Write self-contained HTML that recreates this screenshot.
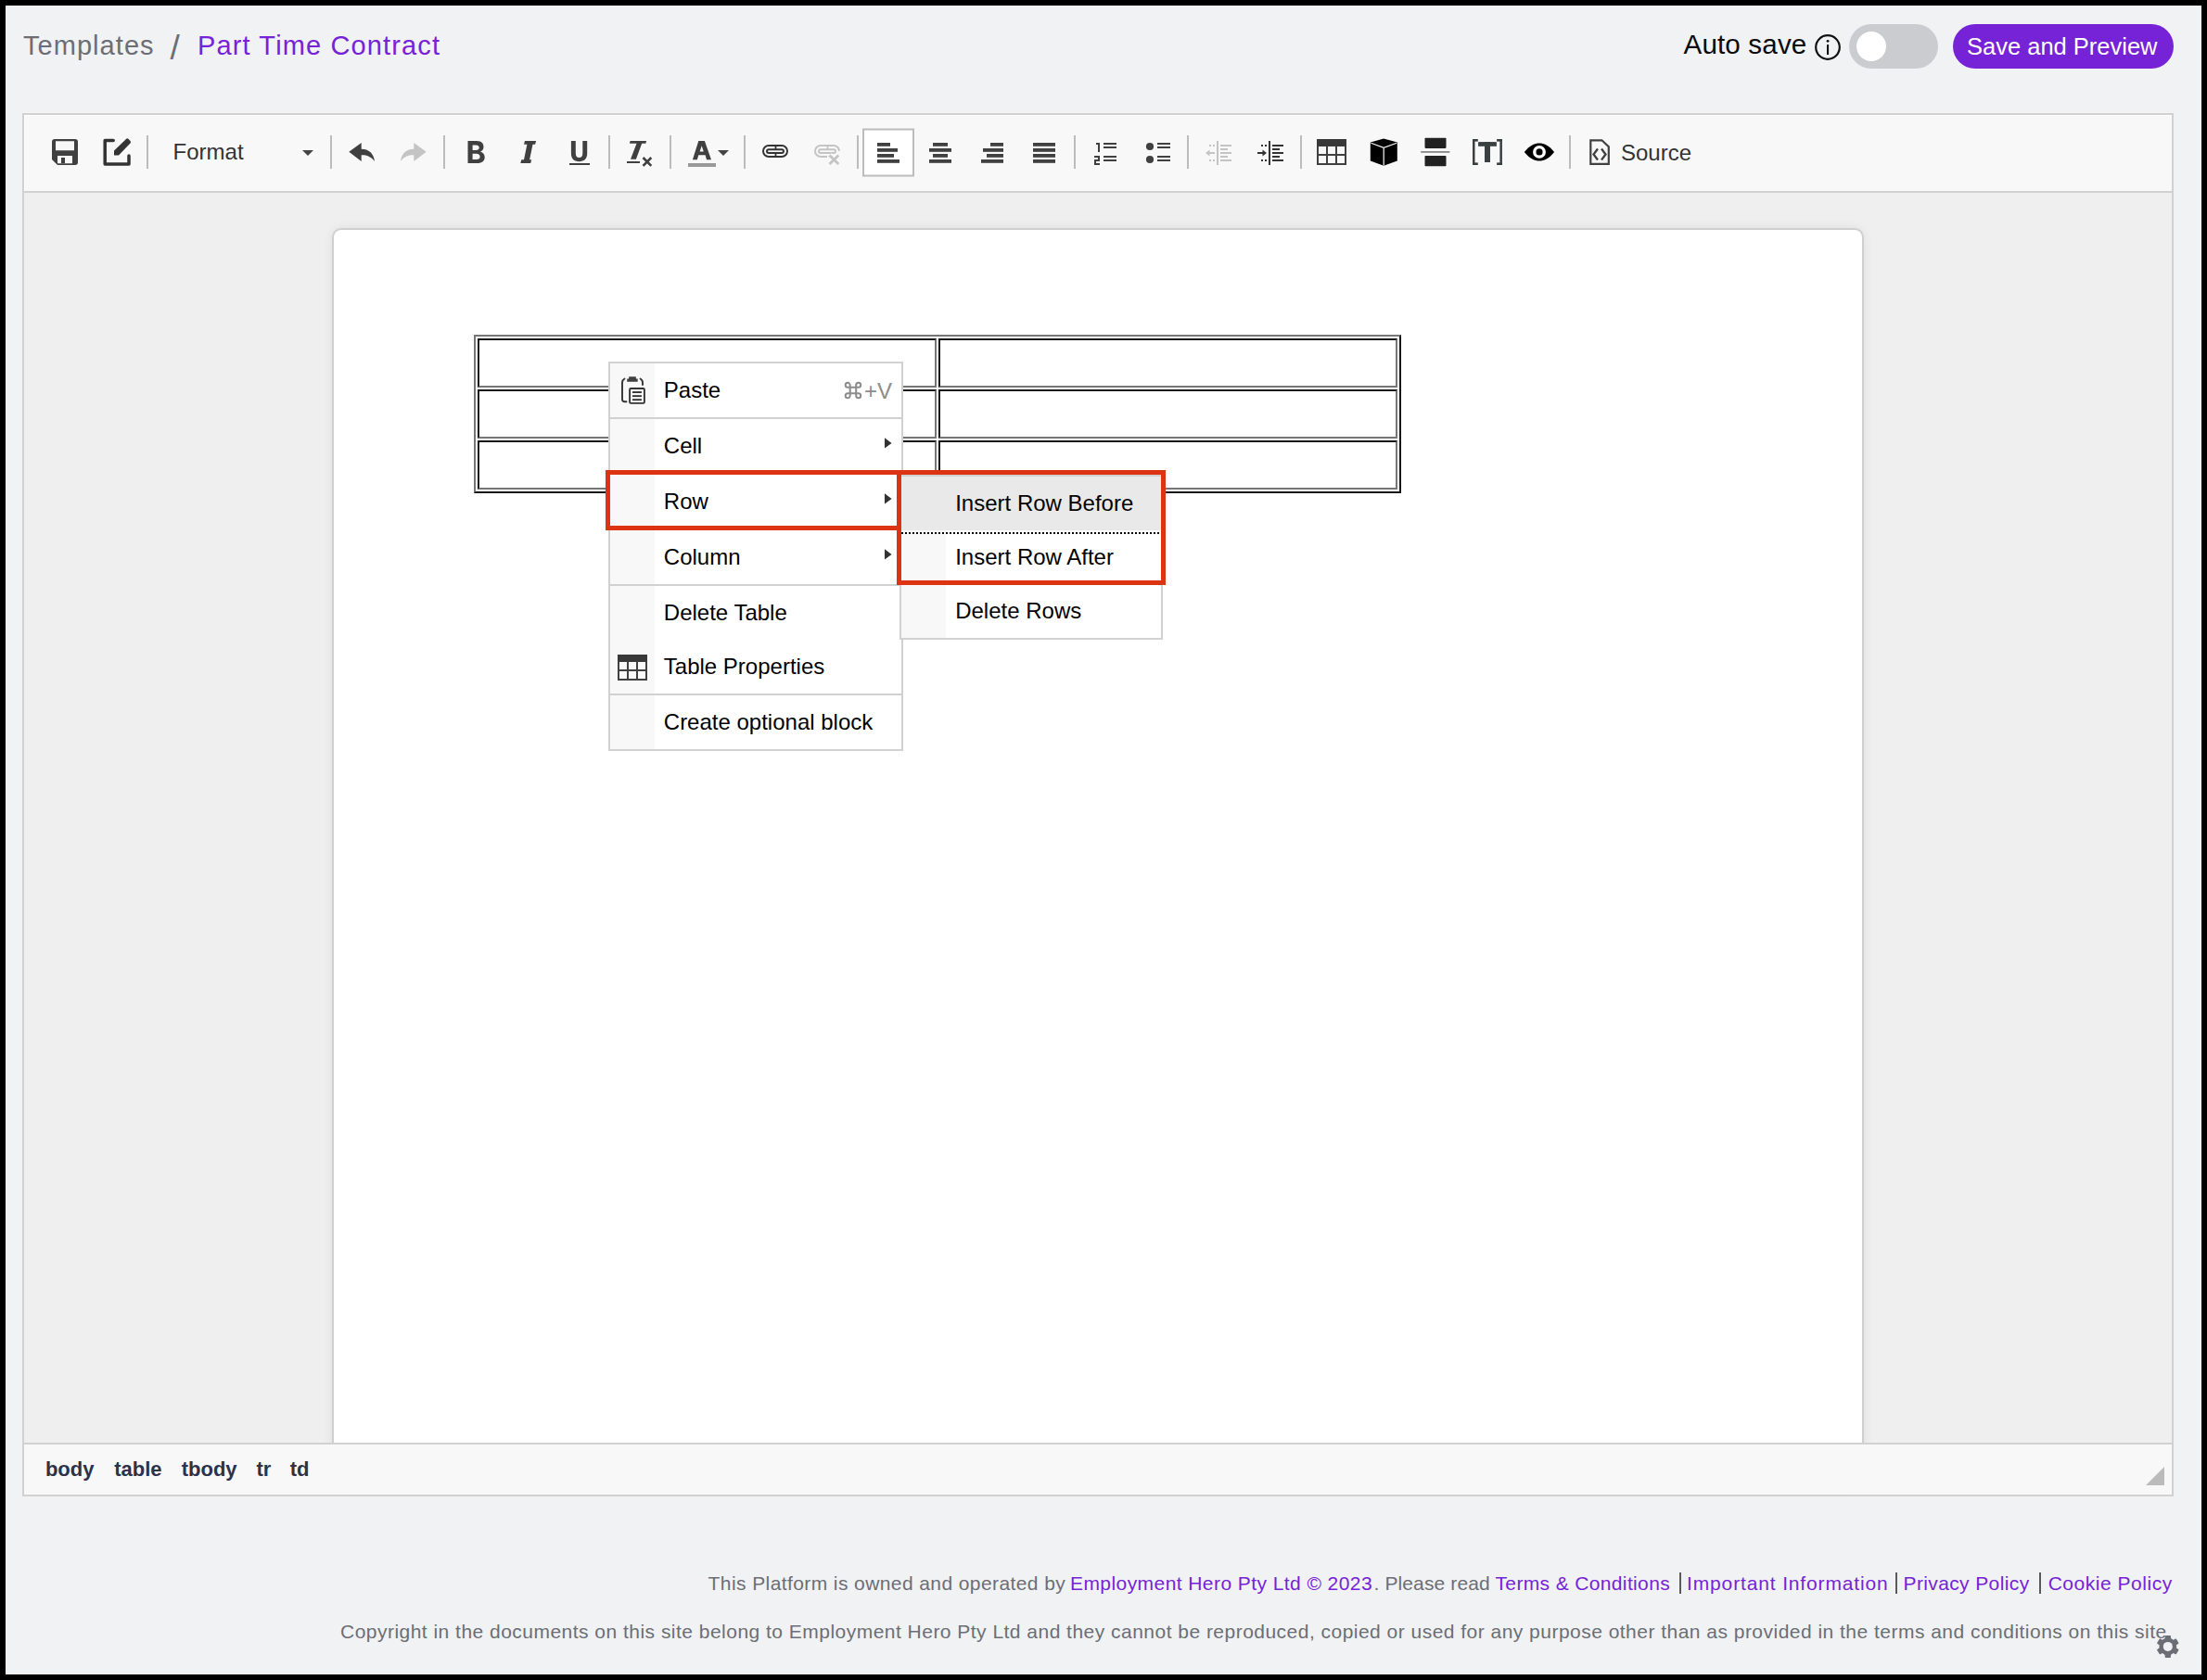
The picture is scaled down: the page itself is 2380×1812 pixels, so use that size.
<!DOCTYPE html>
<html>
<head>
<meta charset="utf-8">
<style>
html,body{margin:0;padding:0;}
body{width:2380px;height:1812px;overflow:hidden;background:#000;position:relative;font-family:"Liberation Sans",sans-serif;}
.a{position:absolute;}
.t{position:absolute;white-space:pre;line-height:1;}
#app{left:6px;top:6px;width:2368px;height:1800px;background:#fff;}
#bg{left:7px;top:7px;width:2366px;height:1798px;background:#f1f2f4;}
svg{position:absolute;overflow:visible;}
</style>
</head>
<body>
<div id="app" class="a"></div>
<div id="bg" class="a"></div>

<!-- HEADER -->
<div class="t" style="left:25px;top:35.2px;font-size:29px;letter-spacing:1.05px;color:#6b6e75;">Templates</div>
<div class="t" style="left:183.5px;top:32.5px;font-size:37px;color:#6b6e75;">/</div>
<div class="t" style="left:213px;top:35.2px;font-size:29px;letter-spacing:1.13px;color:#7622d7;">Part Time Contract</div>

<div class="t" style="left:1815.5px;top:32.6px;font-size:29.6px;letter-spacing:0.15px;color:#0b0b0b;">Auto save</div>
<!-- info icon -->
<svg style="left:1957px;top:36.6px" width="28" height="28" viewBox="0 0 28 28">
  <circle cx="14" cy="14" r="12.8" fill="none" stroke="#111" stroke-width="2.2"/>
  <rect x="13" y="11" width="2.1" height="11" rx="0.5" fill="#111"/>
  <circle cx="14.05" cy="7.3" r="1.4" fill="#111"/>
</svg>
<!-- toggle -->
<div class="a" style="left:1994px;top:26px;width:96px;height:48px;border-radius:24px;background:#cbccd0;"></div>
<div class="a" style="left:2002px;top:34px;width:32px;height:32px;border-radius:16px;background:#fff;"></div>
<!-- button -->
<div class="a" style="left:2106px;top:26px;width:238px;height:48px;border-radius:24px;background:#7622d7;"></div>
<div class="t" style="left:2121px;top:38.1px;font-size:25.5px;color:#fff;">Save and Preview</div>

<!-- EDITOR -->
<div class="a" style="left:24px;top:122px;width:2316px;height:1488px;border:2px solid #d1d1d1;background:#efefef;"></div>
<div class="a" style="left:26px;top:124px;width:2316px;height:82px;background:#f8f8f8;border-bottom:2px solid #d1d1d1;box-shadow:inset 1px 1px 0 #fff;"></div>

<!--TOOLBAR-->
<svg style="left:0;top:0" width="2380" height="260" viewBox="0 0 2380 260">
<rect x="158" y="146" width="2" height="36" fill="#bcbcbc"/>
<rect x="356" y="146" width="2" height="36" fill="#bcbcbc"/>
<rect x="478" y="146" width="2" height="36" fill="#bcbcbc"/>
<rect x="656" y="146" width="2" height="36" fill="#bcbcbc"/>
<rect x="722" y="146" width="2" height="36" fill="#bcbcbc"/>
<rect x="802" y="146" width="2" height="36" fill="#bcbcbc"/>
<rect x="924" y="146" width="2" height="36" fill="#bcbcbc"/>
<rect x="1158" y="146" width="2" height="36" fill="#bcbcbc"/>
<rect x="1280" y="146" width="2" height="36" fill="#bcbcbc"/>
<rect x="1402" y="146" width="2" height="36" fill="#bcbcbc"/>
<rect x="1692" y="146" width="2" height="36" fill="#bcbcbc"/>
<path fill="#404040" fill-rule="evenodd" d="M59,150 H81 Q84,150 84,153 V175 Q84,178 81,178 H62 L56,172 V153 Q56,150 59,150 Z M60,152.2 H80 V162.2 H60 Z M62,168 H78 V176.2 H62 Z"/>
<rect x="66" y="170" width="4" height="6.2" fill="#404040"/>
<path d="M122.2,151.4 H113.2 V177 H139 V168" fill="none" stroke="#333" stroke-width="3.5" stroke-linecap="round" stroke-linejoin="round"/>
<path fill="#333" d="M123,162.6 L136,149.9 Q137.3,148.8 138.6,150 L140.5,151.9 Q141.6,153.2 140.5,154.4 L128,167.6 H123 Z"/>
<path fill="#444" d="M326,162 H338 L332,168 Z"/>
<path fill="#404040" d="M376.3,163.8 L389.7,153.9 V160.7 C397,160.5 403,165 404,174 C400,168.5 395,167 389.7,167.2 V174 Z"/>
<path fill="#c4c4c4" transform="translate(836,0) scale(-1,1)" d="M376.3,163.8 L389.7,153.9 V160.7 C397,160.5 403,165 404,174 C400,168.5 395,167 389.7,167.2 V174 Z"/>
<path fill="#404040" fill-rule="evenodd" d="M504.5,152 H514 C519.5,152 521.5,155 521.5,158.2 C521.5,161 520,162.8 518,163.5 C521,164.3 522.7,166.8 522.7,169.5 C522.7,173.5 520,176 514.5,176 H504.5 Z M509.6,156.6 H513 C515.5,156.6 516.7,157.6 516.7,159.2 C516.7,160.9 515.5,161.9 513,161.9 H509.6 Z M509.6,165.8 H513.5 C516.5,165.8 517.6,167.2 517.6,168.9 C517.6,170.8 516.5,171.9 513.5,171.9 H509.6 Z"/>
<path fill="#404040" d="M566,152 H578.1 L577.1,155.7 H574.5 L571.1,172.2 H573.2 L572.2,176 H561.3 L562.3,172.2 H565 L568.4,155.7 H565 Z"/>
<path fill="#404040" d="M615.9,152 H620.8 V165.5 C620.8,168.5 622.3,170 624.5,170 C626.8,170 628.3,168.5 628.3,165.5 V152 H633.2 V165.5 C633.2,171 630,174.2 624.5,174.2 C619,174.2 615.9,171 615.9,165.5 Z"/>
<rect x="614" y="176" width="22" height="2" fill="#404040"/>
<path fill="#404040" d="M679.6,152 H697.1 L696.4,154.8 H692.2 L685.9,171.8 H680 L686.5,154.8 H678.9 Z"/>
<rect x="676" y="174" width="14" height="2" fill="#404040"/>
<path d="M693.5,170 L702.3,178.8 M702.3,170 L693.5,178.8" stroke="#404040" stroke-width="2.6"/>
<path fill="#404040" fill-rule="evenodd" d="M753.3,152.1 H759.9 L767,172.3 H762 L760.6,167.3 H753.3 L751.8,172.3 H746.9 Z M754.6,163.6 H758.8 L756.7,157.2 Z"/>
<rect x="742" y="176" width="30" height="4" fill="#999"/>
<path fill="#444" d="M774,162 H786 L780,168 Z"/>
<g fill="none" stroke="#333" stroke-width="2"><path d="M836,157 H829 A6,6 0 0 0 829,169 H836"/><path d="M837,157 H843 A6,6 0 0 1 843,169 H837"/><rect x="827" y="161.2" width="18" height="3.8" rx="1.9"/></g><rect x="835.6" y="156" width="1.8" height="5" fill="#333"/><rect x="835.6" y="165" width="1.8" height="5" fill="#333"/>
<g fill="none" stroke="#c4c4c4" stroke-width="2"><path d="M892,157 H885 A6,6 0 0 0 885,169 H892"/><path d="M893,157 H899 A6,6 0 0 1 905,163"/><path d="M893,169 H896"/><rect x="883" y="161.2" width="18" height="3.8" rx="1.9"/></g><rect x="891.6" y="156" width="1.8" height="5" fill="#c4c4c4"/>
<path d="M894.5,167.5 L904.3,177 M904.3,167.5 L894.5,177" stroke="#f8f8f8" stroke-width="6"/><path d="M894.5,167.5 L904.3,177 M904.3,167.5 L894.5,177" stroke="#c4c4c4" stroke-width="2.8"/>
<rect x="931" y="139.5" width="54" height="50" fill="#fff" stroke="#bcbcbc" stroke-width="2"/>
<rect x="946" y="154" width="14" height="3.8" fill="#404040"/><rect x="946" y="160" width="22" height="3.8" fill="#404040"/><rect x="946" y="166" width="18" height="3.8" fill="#404040"/><rect x="946" y="172" width="24" height="3.8" fill="#404040"/>
<rect x="1006" y="154" width="16" height="3.8" fill="#404040"/><rect x="1002" y="160" width="24" height="3.8" fill="#404040"/><rect x="1006" y="166" width="16" height="3.8" fill="#404040"/><rect x="1002" y="172" width="24" height="3.8" fill="#404040"/>
<rect x="1068" y="154" width="14" height="3.8" fill="#404040"/><rect x="1060" y="160" width="22" height="3.8" fill="#404040"/><rect x="1064" y="166" width="18" height="3.8" fill="#404040"/><rect x="1058" y="172" width="24" height="3.8" fill="#404040"/>
<rect x="1114" y="154" width="24" height="3.8" fill="#404040"/><rect x="1114" y="160" width="24" height="3.8" fill="#404040"/><rect x="1114" y="166" width="24" height="3.8" fill="#404040"/><rect x="1114" y="172" width="24" height="3.8" fill="#404040"/>
<g fill="#404040"><rect x="1182" y="154" width="4" height="2"/><rect x="1184" y="154" width="2" height="10"/><rect x="1180" y="168" width="6" height="2"/><rect x="1184" y="168" width="2" height="6"/><rect x="1180" y="172" width="6" height="2"/><rect x="1180" y="172" width="2" height="6"/><rect x="1180" y="176" width="6" height="2"/><rect x="1190" y="154" width="14" height="2"/><rect x="1190" y="158" width="14" height="2"/><rect x="1190" y="168" width="14" height="2"/><rect x="1190" y="172" width="14" height="2"/><circle cx="1240" cy="158" r="4.1"/><circle cx="1240" cy="172" r="4.1"/><rect x="1248" y="154" width="14" height="2"/><rect x="1248" y="158" width="14" height="2"/><rect x="1248" y="168" width="14" height="2"/><rect x="1248" y="172" width="14" height="2"/></g>
<g fill="#c4c4c4"><rect x="1312" y="152" width="2" height="26"/><rect x="1304" y="156" width="2" height="2"/><rect x="1304" y="172" width="2" height="2"/><rect x="1308" y="156" width="2" height="2"/><rect x="1308" y="172" width="2" height="2"/><rect x="1316" y="156" width="12" height="2"/><rect x="1316" y="160" width="8" height="2"/><rect x="1316" y="164" width="12" height="2"/><rect x="1316" y="168" width="8" height="2"/><rect x="1316" y="172" width="12" height="2"/><rect x="1302" y="164" width="8" height="2"/><path d="M1304.5,161.5 L1300,165 L1304.5,168.5 Z"/></g>
<g fill="#333"><rect x="1368" y="152" width="2" height="26"/><rect x="1360" y="156" width="2" height="2"/><rect x="1360" y="172" width="2" height="2"/><rect x="1364" y="156" width="2" height="2"/><rect x="1364" y="172" width="2" height="2"/><rect x="1372" y="156" width="12" height="2"/><rect x="1372" y="160" width="8" height="2"/><rect x="1372" y="164" width="12" height="2"/><rect x="1372" y="168" width="8" height="2"/><rect x="1372" y="172" width="12" height="2"/><rect x="1356" y="164" width="8" height="2"/><path d="M1361.5,161.5 L1366,165 L1361.5,168.5 Z"/></g>
<path fill="#404040" fill-rule="evenodd" d="M1420,150 H1452 V178 H1420 Z M1422,158 H1430 V166 H1422 Z M1432,158 H1440 V166 H1432 Z M1442,158 H1450 V166 H1442 Z M1422,168 H1430 V176 H1422 Z M1432,168 H1440 V176 H1432 Z M1442,168 H1450 V176 H1442 Z"/>
<rect x="1420" y="150" width="32" height="7.5" fill="#383838"/>
<path fill="#000" d="M1492.2,149.4 L1506.8,153.6 V173.6 L1492.2,178.8 L1477.8,173.6 V153.6 Z"/>
<path fill="none" stroke="#f8f8f8" stroke-width="1.2" d="M1478.4,154.2 L1492.2,159.4 L1506.2,154.2 M1492.2,159.4 V178.5"/>
<rect x="1536.5" y="148.7" width="23" height="11.2" rx="0.8" fill="#222"/><rect x="1536.5" y="168" width="23" height="11.2" rx="0.8" fill="#222"/><rect x="1532.2" y="163" width="31.2" height="1.8" fill="#888"/>
<g fill="#3a3f3f"><rect x="1588" y="150" width="2.5" height="28"/><rect x="1588" y="150" width="5.8" height="2.6"/><rect x="1588" y="175.4" width="5.8" height="2.6"/><rect x="1617.4" y="150" width="2.5" height="28"/><rect x="1614.1" y="150" width="5.8" height="2.6"/><rect x="1614.1" y="175.4" width="5.8" height="2.6"/><rect x="1594.1" y="153.1" width="19.8" height="4.7"/><rect x="1601" y="153.1" width="6" height="21.9"/></g>
<path fill="#000" d="M1643.8,164 C1650,156.5 1655,154.5 1660,154.5 C1665,154.5 1670,156.5 1676.1,164 C1670,171.5 1665,173.5 1660,173.5 C1655,173.5 1650,171.5 1643.8,164 Z"/>
<circle cx="1660" cy="163.9" r="5.25" fill="none" stroke="#fff" stroke-width="3.4"/>
<path fill="none" stroke="#404040" stroke-width="2.2" d="M1715.3,151.3 H1727.4 L1734.8,158.2 V176.8 H1715.3 Z"/>
<path fill="none" stroke="#404040" stroke-width="2.3" d="M1723,160.5 L1718.5,166.5 L1723,172.5 M1727,160.5 L1731.5,166.5 L1727,172.5"/>
</svg>
<div class="t" style="left:186.6px;top:151.7px;font-size:24px;color:#333;">Format</div>
<div class="t" style="left:1748px;top:152.9px;font-size:24px;color:#333;">Source</div>


<!--PAGE-->
<div class="a" style="left:358px;top:246px;width:1652px;height:1360px;box-sizing:border-box;border:2px solid #cfcfcf;border-radius:10px;background:#fff;box-shadow:0 0 12px rgba(0,0,0,0.07);"></div>
<!-- table -->
<div class="a" style="left:511px;top:361px;width:996px;height:167px;border:2px solid;border-color:#767676 #161616 #161616 #767676;"></div>
<div class="a" style="left:515px;top:365px;width:491px;height:49px;border:2px solid;border-color:#161616 #767676 #767676 #161616;"></div>
<div class="a" style="left:1012px;top:365px;width:491px;height:49px;border:2px solid;border-color:#161616 #767676 #767676 #161616;"></div>
<div class="a" style="left:515px;top:420px;width:491px;height:49px;border:2px solid;border-color:#161616 #767676 #767676 #161616;"></div>
<div class="a" style="left:1012px;top:420px;width:491px;height:49px;border:2px solid;border-color:#161616 #767676 #767676 #161616;"></div>
<div class="a" style="left:515px;top:475px;width:491px;height:49px;border:2px solid;border-color:#161616 #767676 #767676 #161616;"></div>
<div class="a" style="left:1012px;top:475px;width:491px;height:49px;border:2px solid;border-color:#161616 #767676 #767676 #161616;"></div>
<div class="a" style="left:656px;top:390px;width:314px;height:416px;border:2px solid #d1d1d1;background:#fff;"></div>
<div class="a" style="left:658px;top:392px;width:48px;height:416px;background:#f8f8f8;"></div>
<div class="a" style="left:658px;top:450px;width:314px;height:2px;background:#d1d1d1;"></div>
<div class="a" style="left:658px;top:510px;width:314px;height:2px;background:#d1d1d1;"></div>
<div class="a" style="left:658px;top:570px;width:314px;height:2px;background:#d1d1d1;"></div>
<div class="a" style="left:658px;top:630px;width:314px;height:2px;background:#d1d1d1;"></div>
<div class="a" style="left:658px;top:748px;width:314px;height:2px;background:#d1d1d1;"></div>
<div class="t" style="left:715.8px;top:408.88px;font-size:24px;color:#000;">Paste</div>
<div class="t" style="left:715.8px;top:468.88px;font-size:24px;color:#000;">Cell</div>
<div class="t" style="left:715.8px;top:528.88px;font-size:24px;color:#000;">Row</div>
<div class="t" style="left:715.8px;top:588.88px;font-size:24px;color:#000;">Column</div>
<div class="t" style="left:715.8px;top:648.88px;font-size:24px;color:#000;">Delete Table</div>
<div class="t" style="left:715.8px;top:706.88px;font-size:24px;color:#000;">Table Properties</div>
<div class="t" style="left:715.8px;top:766.88px;font-size:24px;color:#000;">Create optional block</div>
<svg style="left:0;top:0" width="1" height="1"><path fill="#333" d="M954,472.3 L961.6,478 L954,483.6 Z"/></svg>
<svg style="left:0;top:0" width="1" height="1"><path fill="#333" d="M954,532.3 L961.6,538 L954,543.6 Z"/></svg>
<svg style="left:0;top:0" width="1" height="1"><path fill="#333" d="M954,592.3 L961.6,598 L954,603.6 Z"/></svg>
<div class="t" style="left:932px;top:409.7px;font-size:24px;color:#8c8c8c;">+V</div>
<svg style="left:0;top:0" width="1" height="1"><g fill="none" stroke="#8c8c8c" stroke-width="2"><path d="M916.7,417.85 H923.2 V424.35 H916.7 Z"/><path d="M916.7,417.85 V415.35 A2.5,2.5 0 1 0 914.2,417.85 Z Z"/><path d="M923.2,417.85 V415.35 A2.5,2.5 0 1 1 925.7,417.85 Z"/><path d="M916.7,424.35 V426.85 A2.5,2.5 0 1 1 914.2,424.35 Z"/><path d="M923.2,424.35 H925.7 A2.5,2.5 0 1 1 923.2,426.85 Z"/></g></svg>
<svg style="left:0;top:0" width="1" height="1">
<path fill="none" stroke="#333" stroke-width="1.9" stroke-linecap="round" d="M673.5,408.5 Q671,410 671,412.5 V430.5 Q671,433.3 673.8,433.3 H675.5"/>
<path fill="none" stroke="#333" stroke-width="1.9" stroke-linecap="round" d="M690.6,408.5 Q693,410 693,412.5 V415"/>
<path fill="#404040" d="M678.3,406.2 H685.7 L686,408.5 H687.7 V411.7 H676.2 V408.5 H678 Z"/>
<rect x="679.1" y="419" width="15.8" height="15.9" rx="1.2" fill="none" stroke="#333" stroke-width="1.9"/>
<rect x="682" y="422.1" width="9.9" height="1.9" fill="#333"/><rect x="682" y="426.2" width="9.9" height="1.9" fill="#333"/><rect x="682" y="430.2" width="9.9" height="1.9" fill="#333"/>
</svg>
<svg style="left:0;top:0" width="1" height="1">
<path fill="#404040" fill-rule="evenodd" d="M666,706 H698 V734 H666 Z M668,714 H676 V722 H668 Z M678,714 H686 V722 H678 Z M688,714 H696 V722 H688 Z M668,724 H676 V732 H668 Z M678,724 H686 V732 H678 Z M688,724 H696 V732 H688 Z"/>
<rect x="666" y="706" width="32" height="7.5" fill="#383838"/>
</svg>
<div class="a" style="left:970px;top:512px;width:280px;height:174px;border:2px solid #d1d1d1;background:#fff;"></div>
<div class="a" style="left:972px;top:514px;width:48px;height:174px;background:#f8f8f8;"></div>
<div class="a" style="left:972px;top:514px;width:280px;height:58px;background:#e9e9e9;"></div>
<div class="a" style="left:972px;top:574px;width:280px;height:2px;background-image:linear-gradient(90deg,#000 50%,transparent 50%);background-size:4px 2px;"></div>
<div class="t" style="left:1030.2px;top:530.58px;font-size:24px;color:#000;">Insert Row Before</div>
<div class="t" style="left:1030.2px;top:588.58px;font-size:24px;color:#000;">Insert Row After</div>
<div class="t" style="left:1030.2px;top:646.58px;font-size:24px;color:#000;">Delete Rows</div>
<div class="a" style="left:653px;top:507px;width:309px;height:55px;border:5px solid #dc3412;"></div>
<div class="a" style="left:967px;top:507px;width:280px;height:114px;border:5px solid #dc3412;"></div>


<!--STATUS-->
<div class="a" style="z-index:5;left:26px;top:1556px;width:2316px;height:54px;background:#f8f8f8;border-top:2px solid #d1d1d1;"></div>
<div class="a" style="z-index:5;left:24px;top:1612px;width:2320px;height:2px;background:#d1d1d1;"></div>
<div class="a" style="z-index:5;left:24px;top:1556px;width:2px;height:58px;background:#d1d1d1;"></div>
<div class="a" style="z-index:5;left:2342px;top:1556px;width:2px;height:58px;background:#d1d1d1;"></div>
<div class="t" style="z-index:6;left:48.9px;top:1574.1px;font-size:22px;font-weight:bold;color:#2b3249;">body</div>
<div class="t" style="z-index:6;left:123.2px;top:1574.1px;font-size:22px;font-weight:bold;color:#2b3249;">table</div>
<div class="t" style="z-index:6;left:195.7px;top:1574.1px;font-size:22px;font-weight:bold;color:#2b3249;">tbody</div>
<div class="t" style="z-index:6;left:276.5px;top:1574.1px;font-size:22px;font-weight:bold;color:#2b3249;">tr</div>
<div class="t" style="z-index:6;left:312.7px;top:1574.1px;font-size:22px;font-weight:bold;color:#2b3249;">td</div>
<svg style="left:0;top:0;z-index:6" width="1" height="1"><path fill="#bbb" d="M2334,1582 V1602 H2314 Z"/></svg>


<!--FOOTER-->
<div class="t" style="left:763.6px;top:1697.2px;font-size:21px;letter-spacing:0.41px;color:#6b6e75;">This Platform is owned and operated by</div>
<div class="t" style="left:1154.0px;top:1697.2px;font-size:21px;letter-spacing:0.43px;color:#7622d7;">Employment Hero Pty Ltd © 2023</div>
<div class="t" style="left:1481.5px;top:1697.2px;font-size:21px;letter-spacing:0.12px;color:#6b6e75;">. Please read</div>
<div class="t" style="left:1612.5px;top:1697.2px;font-size:21px;letter-spacing:0.36px;color:#7622d7;">Terms &amp; Conditions</div>
<div class="t" style="left:1819.0px;top:1697.2px;font-size:21px;letter-spacing:0.86px;color:#7622d7;">Important Information</div>
<div class="t" style="left:2052.5px;top:1697.2px;font-size:21px;letter-spacing:0.38px;color:#7622d7;">Privacy Policy</div>
<div class="t" style="left:2208.7px;top:1697.2px;font-size:21px;letter-spacing:0.52px;color:#7622d7;">Cookie Policy</div>
<div class="a" style="left:1811px;top:1696px;width:2px;height:23px;background:#5a5a5a;"></div>
<div class="a" style="left:2044px;top:1696px;width:2px;height:23px;background:#5a5a5a;"></div>
<div class="a" style="left:2199px;top:1696px;width:2px;height:23px;background:#5a5a5a;"></div>
<div class="t" style="left:367px;top:1749.2px;font-size:21px;letter-spacing:0.477px;color:#6b6e75;">Copyright in the documents on this site belong to Employment Hero Pty Ltd and they cannot be reproduced, copied or used for any purpose other than as provided in the terms and conditions on this site.</div>
<svg style="left:0;top:0;z-index:7" width="1" height="1"><g transform="translate(2337.8,1775.9)" fill="#6b6e75"><circle r="9.4"/><rect x="-3.15" y="-12" width="6.3" height="6" rx="0.9" transform="rotate(0)"/><rect x="-3.15" y="-12" width="6.3" height="6" rx="0.9" transform="rotate(60)"/><rect x="-3.15" y="-12" width="6.3" height="6" rx="0.9" transform="rotate(120)"/><rect x="-3.15" y="-12" width="6.3" height="6" rx="0.9" transform="rotate(180)"/><rect x="-3.15" y="-12" width="6.3" height="6" rx="0.9" transform="rotate(240)"/><rect x="-3.15" y="-12" width="6.3" height="6" rx="0.9" transform="rotate(300)"/><circle r="5" fill="#f1f2f4"/></g></svg>


</body>
</html>
